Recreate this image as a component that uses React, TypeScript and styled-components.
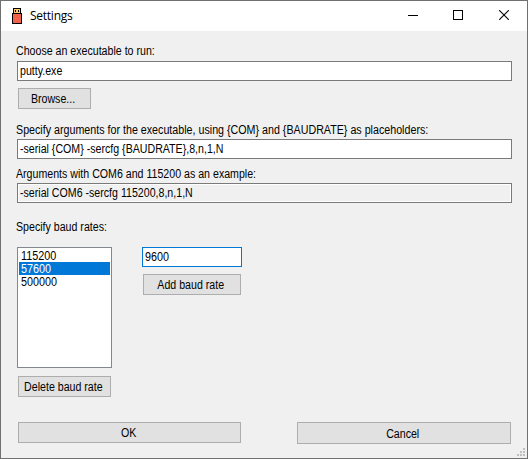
import React from "react";
import styled, { createGlobalStyle } from "styled-components";

const Global = createGlobalStyle`
  *, *::before, *::after { box-sizing: border-box; }
  body { margin: 0; overflow: hidden; }
`;

const Window = styled.main`
  width: 528px;
  height: 459px;
  position: relative;
  background: #f0f0f0;
  border: 1px solid #707070;
  font: 12px/13px "Liberation Sans", Arial, sans-serif;
  color: #000;
`;

const TitleBar = styled.header`
  height: 30px;
  background: #fff;
  display: flex;
  align-items: center;
  padding-left: 11px;
`;

const Title = styled.h1`
  margin: 0 auto 0 8px;
  font: 12px/16px "Open Sans", "Noto Sans", sans-serif;
  letter-spacing: -0.25px;
`;

const Caption = styled.span<{ $inset?: number }>`
  width: 45px;
  height: 30px;
  display: flex;
  padding: 9px 0 0 ${(p) => p.$inset ?? 16}px;
`;

const Body = styled.div`
  padding: 13px 15px 0 16px;
`;

/* Condensed run of dialog text */
const Text = styled.span<{ $center?: boolean; $scale?: number }>`
  display: inline-block;
  vertical-align: top;
  white-space: pre;
  transform: scaleX(${(p) => p.$scale ?? 0.885});
  transform-origin: ${(p) => (p.$center ? "center" : "left")};
`;

const Label = styled.label<{ $top?: number; $drop?: number }>`
  display: block;
  height: 13px;
  padding-top: ${(p) => p.$drop ?? 1}px;
  margin: ${(p) => p.$top ?? 0}px 0 4px -1px;
`;

const Field = styled.div<{ $readOnly?: boolean; $focus?: boolean; $w?: number }>`
  width: ${(p) => (p.$w ? p.$w + "px" : "100%")};
  height: 20px;
  padding: 3px 0 0 2px;
  background: ${(p) => (p.$readOnly ? "#f0f0f0" : "#fff")};
  border: 1px solid ${(p) => (p.$focus ? "#0078d7" : "#7a7a7a")};
  box-shadow: inset 0 0 0 1px #fff;
`;

const Button = styled.button<{ $w: number; $h?: number; $top?: number }>`
  display: flex;
  justify-content: center;
  align-items: center;
  width: ${(p) => p.$w}px;
  height: ${(p) => p.$h ?? 21}px;
  margin: ${(p) => p.$top ?? 0}px 0 0 1px;
  padding: 2px 2px 0 0;
  background: #e1e1e1;
  border: 1px solid #adadad;
  border-radius: 0;
  font: inherit;
  color: inherit;
`;

const Rates = styled.div`
  display: flex;
  gap: 30px;
  margin-top: 14px;
`;

const List = styled.ul`
  list-style: none;
  margin: 0;
  padding: 1px;
  width: 95px;
  height: 121px;
  background: #fff;
  border: 1px solid #828790;
`;

const Item = styled.li<{ $selected?: boolean }>`
  height: 13px;
  padding: 1px 0 0 2px;
  background: ${(p) => (p.$selected ? "#0078d7" : "transparent")};
  color: ${(p) => (p.$selected ? "#fff" : "#000")};
`;

const Actions = styled.footer`
  display: flex;
  gap: 55px;
  margin-top: 25px;
`;

const Grip = styled.svg`
  position: absolute;
  right: 2px;
  bottom: 2px;
`;

const UsbIcon = () => (
  <svg width="10" height="16" viewBox="0 0 10 16" shapeRendering="crispEdges">
    <path fill="#000" d="M1 0h8v5h1v11H0V5h1z" />
    <path fill="#ffc66b" d="M2 1h6v4H2z" />
    <path fill="#000" d="M3 2h1v2H3zM6 2h1v2H6z" />
    <path fill="#f0624a" d="M1 6h8v9H1z" />
  </svg>
);

export default function App() {
  return (
    <Window>
      <Global />
      <TitleBar>
        <UsbIcon />
        <Title>Settings</Title>
        <Caption>
          <svg width="10" height="10" shapeRendering="crispEdges"><path d="M0 5.5h10" stroke="#000" /></svg>
        </Caption>
        <Caption>
          <svg width="10" height="10" shapeRendering="crispEdges"><path d="M.5.5h9v9h-9z" stroke="#000" fill="none" /></svg>
        </Caption>
        <Caption $inset={17}>
          <svg width="10" height="10"><path d="M.2.2l9.6 9.6M9.8.2L.2 9.8" stroke="#000" strokeWidth="1.1" /></svg>
        </Caption>
      </TitleBar>
      <Body>
        <Label><Text>Choose an executable to run:</Text></Label>
        <Field><Text>putty.exe</Text></Field>
        <Button $w={73} $top={7}><Text $center>Browse...</Text></Button>
        <Label $top={13} $drop={2}><Text $scale={0.891}>{"Specify arguments for the executable, using {COM} and {BAUDRATE} as placeholders:"}</Text></Label>
        <Field><Text>{"-serial {COM} -sercfg {BAUDRATE},8,n,1,N"}</Text></Field>
        <Label $top={7} $drop={2}><Text>Arguments with COM6 and 115200 as an example:</Text></Label>
        <Field $readOnly><Text>-serial COM6 -sercfg 115200,8,n,1,N</Text></Field>
        <Label $top={17}><Text>Specify baud rates:</Text></Label>
        <Rates>
          <div>
            <List>
              <Item><Text $scale={0.9}>115200</Text></Item>
              <Item $selected><Text $scale={0.9}>57600</Text></Item>
              <Item><Text $scale={0.9}>500000</Text></Item>
            </List>
            <Button $w={93} $top={8}><Text $center>Delete baud rate</Text></Button>
          </div>
          <div>
            <Field $focus $w={100}><Text $scale={0.9}>9600</Text></Field>
            <Button $w={98} $top={7}><Text $center>Add baud rate</Text></Button>
          </div>
        </Rates>
        <Actions>
          <Button $w={223}><Text $center>OK</Text></Button>
          <Button $w={214} $h={22}><Text $center>Cancel</Text></Button>
        </Actions>
      </Body>
      <Grip width="8" height="8" shapeRendering="crispEdges">
        <path fill="#bfbfbf" d="M6 0h2v2H6zM3 3h2v2H3zM6 3h2v2H6zM0 6h2v2H0zM3 6h2v2H3zM6 6h2v2H6z" />
      </Grip>
    </Window>
  );
}
